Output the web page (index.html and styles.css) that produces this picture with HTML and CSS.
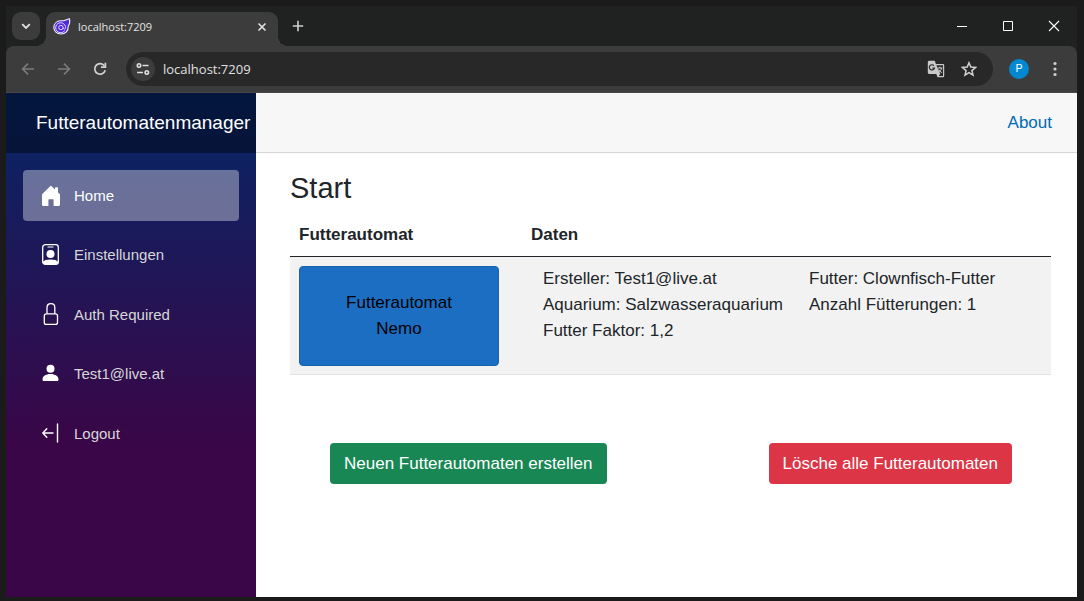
FILE: index.html
```html
<!DOCTYPE html>
<html lang="de">
<head>
<meta charset="utf-8">
<title>Futterautomatenmanager</title>
<link rel="stylesheet" href="styles.css">
</head>
<body>
<div class="window">
  <header class="tabbar">
    <button class="tab-search" aria-label="Tabs durchsuchen"><svg width="12" height="12" viewBox="0 0 12 12" fill="none" stroke="#e3e3e3" stroke-width="1.8"><path d="M2.2 4.2 6 8l3.800-3.800"/></svg></button>
    <div class="tab">
      <svg class="favicon" width="18" height="18" viewBox="0 0 18 18"><path d="M16.500.8c.6 2.800.2 5.200-1.300 7.400C15.500 12.700 12.400 16 8 16c-4.200 0-7.200-2.700-7.200-6.400 0-4 3-6.600 6.800-6.800 1.600 0 2.700.1 3.800-.4 1.800-.8 3.500-1.300 5.100-1.600z" fill="#512bd4" stroke="#f3efff" stroke-width="1.100"/><g fill="none" stroke="#ddd3ff" stroke-width="1"><path d="M11.800 12.500A5 5 0 1 1 12.400 8.200c.5 2-.2 2.900-1.100 2.900S10.200 10.400 10.200 9.700"/><circle cx="7.900" cy="9.500" r="2.200"/></g></svg>
      <span class="tab-title">localhost:7209</span>
      <button class="tab-close" aria-label="Tab schließen"><svg width="10" height="10" viewBox="0 0 10 10" stroke="#e3e3e3" stroke-width="1.600"><path d="M1.500 1.500l7 7M8.500 1.500l-7 7"/></svg></button>
    </div>
    <button class="new-tab" aria-label="Neuer Tab"><svg width="12" height="12" viewBox="0 0 12 12" stroke="#d0d0d0" stroke-width="1.600"><path d="M6 .8v10.400M.8 6h10.400"/></svg></button>
    <div class="window-controls">
      <button aria-label="Minimieren"><svg width="12" height="12" viewBox="0 0 12 12"><path d="M1 6h10v1H1z" fill="#fff"/></svg></button>
      <button aria-label="Maximieren"><svg width="12" height="12" viewBox="0 0 12 12" fill="none" stroke="#fff"><path d="M1.500 1.500h9v9h-9z"/></svg></button>
      <button aria-label="Schließen"><svg width="12" height="12" viewBox="0 0 12 12" stroke="#fff" stroke-width="1.100"><path d="M1 1l10 10M11 1L1 11"/></svg></button>
    </div>
  </header>

  <div class="toolbar">
    <button class="tool" aria-label="Zurück"><svg width="14" height="14" viewBox="0 0 14 14" fill="none" stroke="#7b7b7b" stroke-width="1.600"><path d="M13 7H2M7 1.600 1.600 7 7 12.400"/></svg></button>
    <button class="tool" aria-label="Vorwärts"><svg width="14" height="14" viewBox="0 0 14 14" fill="none" stroke="#7b7b7b" stroke-width="1.600"><path d="M1 7h11M7 1.600 12.400 7 7 12.400"/></svg></button>
    <button class="tool" aria-label="Neu laden"><svg width="14" height="14" viewBox="0 0 14 14" fill="none" stroke="#d2d2d2" stroke-width="1.700"><path d="M11.400 3.800A5.300 5.300 0 1 0 12.200 8.200"/><path d="M12.400.8v4.400H8"/></svg></button>
    <div class="address">
      <button class="site-info" aria-label="Website-Informationen"><svg width="14" height="14" viewBox="0 0 14 14" fill="none" stroke="#e0e0e0" stroke-width="1.600"><circle cx="3" cy="3.500" r="1.700"/><path d="M6.500 3.500H12.500M1.200 10.500H7"/><circle cx="10.800" cy="10.500" r="1.700"/></svg></button>
      <input class="url" type="text" value="localhost:7209" aria-label="Adresse">
      <button class="in-bar" aria-label="Seite übersetzen"><svg width="18" height="18" viewBox="0 0 18 18"><path d="M2.500.8h5.300l1.100 3.300H16a1.200 1.200 0 0 1 1.200 1.200V16a1.200 1.200 0 0 1-1.200 1.200h-5.500L9.300 14H2.200A1.500 1.500 0 0 1 .8 12.500v-10A1.500 1.500 0 0 1 2.500.8z" fill="#c9c9c9"/><path d="M9.300 5.300h6.700v10.600h-4.400l1.700-2z" fill="#2a2a2a"/><g fill="none" stroke="#292929" stroke-width="1.200"><path d="M7 5.700A2.600 2.600 0 1 0 7.500 8H5.200"/></g><path d="M10.500 8h5M12.900 6.800V8M14.600 8c-.4 2-1.500 3.500-2.800 4.400M11.700 9.500c.8 1.400 1.800 2.300 3.200 3.200" fill="none" stroke="#d0d0d0"/></svg></button>
      <button class="in-bar" aria-label="Lesezeichen"><svg width="16" height="16" viewBox="0 0 16 16" fill="none" stroke="#d0d0d0" stroke-width="1.500"><path d="M8 1.800l1.800 4.300 4.700.4-3.600 3.100 1.100 4.600L8 11.700l-4 2.500 1.100-4.600-3.600-3.100 4.700-.4z"/></svg></button>
    </div>
    <button class="profile" aria-label="Profil">P</button>
    <button class="tool menu" aria-label="Menü"><svg width="4" height="16" viewBox="0 0 4 16" fill="#d0d0d0"><circle cx="2" cy="2.500" r="1.600"/><circle cx="2" cy="8" r="1.600"/><circle cx="2" cy="13.500" r="1.600"/></svg></button>
  </div>

  <div class="page">
    <aside class="sidebar">
      <div class="brand-row"><a class="brand" href="#">Futterautomatenmanager</a></div>
      <nav class="nav">
        <a class="nav-link active" href="#"><svg width="20" height="22" viewBox="0 0 20 22" fill="#fff"><path d="M9.200 1.200a1 1 0 0 1 1.400 0l3.400 3.300V2.900c0-.4.300-.7.700-.7h1.600c.4 0 .7.300.7.700v4.500l1.700 1.700c.2.200.3.500.3.800v9.800c0 .7-.5 1.200-1.200 1.200h-5.200v-5.900c0-.5-.3-.8-.8-.8H8.200c-.5 0-.8.300-.8.800v5.900H2.200c-.7 0-1.200-.5-1.200-1.200V9.900c0-.3.100-.6.300-.8z"/></svg>Home</a>
        <a class="nav-link" href="#"><svg width="20" height="22" viewBox="0 0 20 22"><rect x="1.700" y=".7" width="15.600" height="19.600" rx="2.600" fill="none" stroke="#fff" stroke-width="1.300"/><path d="M7 3h5" stroke="#fff" stroke-width="1.200" stroke-linecap="round"/><circle cx="9.500" cy="10" r="4" fill="#fff"/><path d="M1.700 18.100c1.200-1.700 4-2.500 7.800-2.500s6.600.8 7.800 2.500c-.2 1.500-1 2.300-2.600 2.300H4.300c-1.600 0-2.400-.8-2.600-2.300z" fill="#fff"/></svg>Einstellungen</a>
        <a class="nav-link" href="#"><svg width="20" height="24" viewBox="0 0 20 24" fill="none" stroke="#fff" stroke-width="1.300"><rect x="3.300" y="10.800" width="13.200" height="10.600" rx="2"/><path d="M6 10.800V4.400C6 2 7.600.7 9.900.7s3.900 1.300 3.900 3.700v6.400"/></svg>Auth Required</a>
        <a class="nav-link" href="#"><svg width="20" height="22" viewBox="0 0 20 22" fill="#fff"><circle cx="9.500" cy="5.800" r="4"/><path d="M1.500 16.500c0-3 3.200-5.400 8-5.400s8 2.400 8 5.400c0 1-.6 1.500-1.400 1.500H2.900c-.8 0-1.400-.5-1.400-1.500z"/></svg>Test1@live.at</a>
        <a class="nav-link" href="#"><svg width="20" height="22" viewBox="0 0 20 22" fill="none" stroke="#fff" stroke-width="1.400" stroke-linecap="round"><path d="M12 10H2M5.800 5.800 1.800 10l4 4.200"/><path d="M16.500 1v18"/></svg>Logout</a>
      </nav>
    </aside>
    <main class="main">
      <div class="top-row"><a class="about" href="#">About</a></div>
      <article class="content">
        <h1>Start</h1>
        <table class="feeders">
          <thead><tr><th class="col-name" scope="col">Futterautomat</th><th scope="col">Daten</th></tr></thead>
          <tbody><tr>
            <td><button class="feeder">Futterautomat<br>Nemo</button></td>
            <td>
              <div class="facts">
                <div>Ersteller: Test1@live.at<br>Aquarium: Salzwasseraquarium<br>Futter Faktor: 1,2</div>
                <div>Futter: Clownfisch-Futter<br>Anzahl Fütterungen: 1</div>
              </div>
            </td>
          </tr></tbody>
        </table>
        <div class="actions">
          <button class="btn create">Neuen Futterautomaten erstellen</button>
          <button class="btn delete">Lösche alle Futterautomaten</button>
        </div>
      </article>
    </main>
  </div>
</div>
</body>
</html>
```
FILE: styles.css
```css
* { box-sizing: border-box; }

body {
  margin: 0;
  min-height: 100vh;
  display: flex;
  padding: 6px 7px 4px 6px;
  background: #1b1b1b;
  color: #212529;
  font: 17px/26px "Liberation Sans", Arial, sans-serif;
}

button {
  padding: 0;
  border: 0;
  background: none;
  font: inherit;
  color: inherit;
}

svg { display: block; flex: none; }

.window {
  flex: 1;
  min-width: 0;
  display: flex;
  flex-direction: column;
  background: #202221;
}

/* Browser tabs */
.tabbar {
  display: flex;
  height: 40px;
  padding: 6px 0 0 6px;
}

.tab-search {
  width: 28px;
  height: 28px;
  margin-right: 6px;
  border-radius: 9px;
  background: #3c3c3c;
  display: grid;
  place-items: center;
}

.tab {
  position: relative;
  width: 232px;
  display: flex;
  align-items: center;
  padding: 0 10px 4px 7px;
  border-radius: 9px 9px 0 0;
  background: #3c3c3c;
}

.tab::before,
.tab::after {
  content: "";
  position: absolute;
  bottom: 0;
  width: 10px;
  height: 10px;
}

.tab::before {
  right: 100%;
  background: radial-gradient(circle at 0 0, transparent 10px, #3c3c3c 10px);
}

.tab::after {
  left: 100%;
  background: radial-gradient(circle at 100% 0, transparent 10px, #3c3c3c 10px);
}

.tab-title {
  flex: 1;
  margin-left: 7px;
  color: #e3e3e3;
  font: 11px/16px "Open Sans", "Noto Sans", sans-serif;
}

.tab-close {
  width: 12px;
  height: 16px;
  display: grid;
  place-items: center;
}

.new-tab {
  width: 28px;
  height: 28px;
  margin-left: 6px;
  display: grid;
  place-items: center;
}

.window-controls {
  margin-left: auto;
  height: 28px;
  display: flex;
}

.window-controls button {
  width: 46px;
  display: grid;
  place-items: center;
}

/* Address bar */
.toolbar {
  display: flex;
  align-items: center;
  height: 47px;
  padding: 0 4px;
  border-bottom: 1px solid #484848;
  border-radius: 8px 8px 0 0;
  background: #3c3c3c;
}

.tool {
  width: 36px;
  height: 32px;
  display: grid;
  place-items: center;
}

.address {
  flex: 1;
  min-width: 0;
  height: 34px;
  margin: 0 16px 0 8px;
  padding: 0 16px 0 5px;
  display: flex;
  align-items: center;
  gap: 16px;
  border-radius: 17px;
  background: #282828;
}

.site-info {
  width: 24px;
  height: 24px;
  border-radius: 50%;
  background: #3c3c3c;
  display: grid;
  place-items: center;
}

.url {
  flex: 1;
  min-width: 0;
  margin-left: -8px;
  padding: 0;
  border: 0;
  outline: 0;
  background: none;
  color: #e0e0e0;
  font: 13px/20px "Open Sans", "Noto Sans", sans-serif;
}

.profile {
  width: 20px;
  height: 20px;
  border-radius: 50%;
  background: #0288d1;
  color: #fff;
  font: 11px/20px Roboto, sans-serif;
}

.menu { margin-left: 8px; }

/* Application */
.page {
  flex: 1;
  display: flex;
  background: #fff;
}

.sidebar {
  flex: none;
  width: 250px;
  background: linear-gradient(180deg, #052767 0%, #3a0647 70%);
}

.brand-row {
  height: 60px;
  padding-left: 30px;
  display: flex;
  align-items: center;
  background: rgba(0, 0, 0, 0.4);
}

.brand {
  color: #fff;
  font-size: 19px;
  text-decoration: none;
}

.nav {
  height: 323px;
  padding: 17px;
  display: flex;
  flex-direction: column;
  justify-content: space-between;
}

.nav-link {
  height: 51px;
  padding-left: 18px;
  display: flex;
  align-items: center;
  gap: 13px;
  border-radius: 4px;
  color: #d7d7d7;
  font-size: 15px;
  text-decoration: none;
}

.nav-link.active {
  background: rgba(255, 255, 255, 0.37);
  color: #fff;
}

.main {
  flex: 1;
  min-width: 0;
}

.top-row {
  height: 60px;
  padding: 0 25px;
  display: flex;
  align-items: center;
  justify-content: flex-end;
  border-bottom: 1px solid #d6d5d5;
  background: #f7f7f7;
}

.about {
  color: #006bb7;
  text-decoration: none;
}

.content { padding: 18px 26px 0 34px; }

h1 {
  margin: 0 0 8px;
  font-size: 29px;
  line-height: 35px;
  font-weight: 400;
}

.feeders {
  width: 100%;
  border-collapse: separate;
  border-spacing: 0;
  table-layout: fixed;
}

.feeders th {
  padding: 8px 9px;
  border-bottom: 1px solid #212529;
  text-align: left;
}

.feeders td {
  padding: 9px 9px 8px;
  border-bottom: 1px solid #dee2e6;
  background: #f2f2f2;
  vertical-align: top;
}

.col-name { width: 232px; }

.feeder {
  display: block;
  width: 200px;
  height: 100px;
  border: 1px solid #1861ac;
  border-radius: 4px;
  background: #1b6ec2;
  color: #000;
}

.facts {
  display: flex;
  gap: 26px;
  padding: 0 12px;
}

.actions {
  display: flex;
  justify-content: space-between;
  padding: 68px 39px 0 40px;
}

.btn {
  padding: 8px 14px 7px;
  border-radius: 4px;
  color: #fff;
}

.create { background: #198754; }
.delete { background: #dc3545; }
```
